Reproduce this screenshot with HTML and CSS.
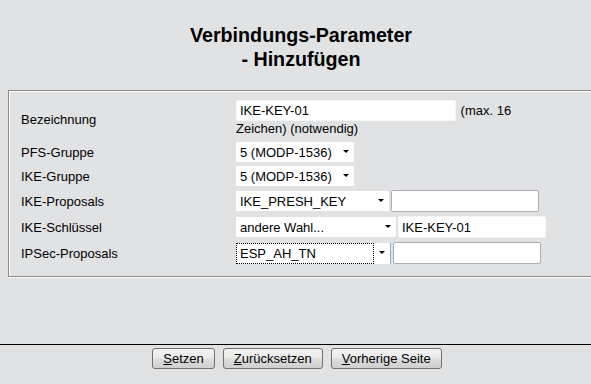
FILE: index.html
```html
<!DOCTYPE html>
<html lang="de">
<head>
    <meta charset="UTF-8">
    <title>Verbindungs-Parameter - Hinzufügen</title>
    <link rel="stylesheet" href="styles.css">
</head>
<body>
<!-- Kopf und Formular -->
<div class="page">
    <h1 class="title">Verbindungs-Parameter<br>- Hinzufügen</h1>

    <form class="params">
        <div class="box">
            <div class="grid">
                <label class="lbl">Bezeichnung</label>
                <div class="cell cell-top">
                    <span class="note"><input class="txt plain name" type="text" value="IKE-KEY-01"> (max. 16 Zeichen) (notwendig)</span>
                </div>

                <label class="lbl">PFS-Gruppe</label>
                <div class="cell">
                    <span class="dropdown dd-group"><select><option>5 (MODP-1536)</option></select></span>
                </div>

                <label class="lbl">IKE-Gruppe</label>
                <div class="cell">
                    <span class="dropdown dd-group"><select><option>5 (MODP-1536)</option></select></span>
                </div>

                <label class="lbl">IKE-Proposals</label>
                <div class="cell">
                    <span class="dropdown dd-ike"><select><option>IKE_PRESH_KEY</option></select></span>
                    <input class="txt extra" type="text" value="">
                </div>

                <label class="lbl">IKE-Schlüssel</label>
                <div class="cell">
                    <span class="dropdown dd-key"><select><option>andere Wahl...</option></select></span>
                    <input class="txt plain extra" type="text" value="IKE-KEY-01">
                </div>

                <label class="lbl">IPSec-Proposals</label>
                <div class="cell">
                    <span class="dropdown dd-ipsec focused"><select><option>ESP_AH_TN</option></select></span>
                    <input class="txt extra" type="text" value="">
                </div>
            </div>
        </div>
    </form>
</div>

<!-- Schaltflächen -->
<div class="footer">
    <button class="btn" type="button"><u>S</u>etzen</button>
    <button class="btn" type="button"><u>Z</u>urücksetzen</button>
    <button class="btn" type="button"><u>V</u>orherige Seite</button>
</div>
</body>
</html>
```

FILE: styles.css
```css
html, body {
    margin: 0;
    padding: 0;
    overflow: hidden;
}
body {
    background-color: #e1e2e4;
    color: #000;
    font-family: "Liberation Sans", Arial, sans-serif;
    font-size: 13px;
}

.page {
    width: 620px;
}

/* Titel */
.title {
    margin: 23px 0 0;
    padding-right: 18px;
    font-size: 19.7px;
    font-weight: bold;
    line-height: 24px;
    text-align: center;
}

/* Rahmen */
.params {
    margin: 19px 0 0 8px;
}
.box {
    border: 1px solid #8a8a8a;
    border-right: none;
    box-shadow: inset 1px 1px 0 #fff, 0 1px 0 #fff;
    padding: 9px 0 12px 12px;
}
.grid {
    display: grid;
    grid-template-columns: 215px auto;
    grid-template-rows: 38px 20px 20px 22px 22px 22px;
    row-gap: 4px;
    align-items: center;
}
.lbl {
    line-height: 15px;
}
.cell {
    display: flex;
    align-items: center;
    gap: 2px;
    height: 100%;
}
.cell-top {
    align-items: flex-start;
}
.note {
    display: block;
    width: 300px;
    line-height: 15px;
}

/* Eingabefelder */
.txt {
    box-sizing: border-box;
    height: 22px;
    margin: 0;
    padding: 0 3px;
    border: 1px solid #abadb3;
    border-radius: 2px;
    background: #fff;
    font: 13px "Liberation Sans", Arial, sans-serif;
    color: #000;
    vertical-align: baseline;
}
.txt.plain {
    border-color: #f6f6f6;
}
.txt.name {
    width: 220px;
    height: 21px;
    margin-right: 1px;
}
.txt.extra {
    width: 148px;
}

/* Auswahllisten */
.dropdown {
    position: relative;
    display: inline-flex;
    box-sizing: border-box;
    height: 20px;
    padding-right: 17px;
    background: #fff;
}
.dropdown::after {
    content: "";
    position: absolute;
    right: 5px;
    top: 50%;
    margin-top: -2px;
    border-left: 3px solid transparent;
    border-right: 3px solid transparent;
    border-top: 3.5px solid #000;
}
.dropdown select {
    -webkit-appearance: none;
    appearance: none;
    width: 100%;
    height: 100%;
    margin: 0;
    padding: 0 0 0 4px;
    border: none;
    border-radius: 0;
    background: transparent;
    font: 13px "Liberation Sans", Arial, sans-serif;
    color: #000;
    outline: none;
}
.dd-group {
    width: 118px;
}
.dd-ike {
    width: 153px;
}
.dd-key {
    width: 160px;
}
.dd-ipsec {
    width: 155px;
}
.dropdown.focused {
    height: 21px;
    border-right: 1px solid #7eb4ea;
    padding-right: 16px;
}
.dropdown.focused select {
    outline: 1px dotted #000;
    outline-offset: -1px;
}

/* Fusszeile */
.footer {
    margin-top: 67px;
    border-top: 1px solid #000;
    padding-top: 3px;
    display: flex;
    justify-content: center;
    gap: 8px;
    padding-left: 3px;
}
.btn {
    height: 21px;
    margin: 0;
    padding: 0 10px;
    border: 1px solid #707070;
    border-radius: 3px;
    background: linear-gradient(#f2f2f2, #ebebeb 45%, #dddddd 55%, #cfcfcf);
    font: 13px "Liberation Sans", Arial, sans-serif;
    color: #000;
    line-height: 19px;
}
.btn u {
    text-decoration: underline;
}
```
